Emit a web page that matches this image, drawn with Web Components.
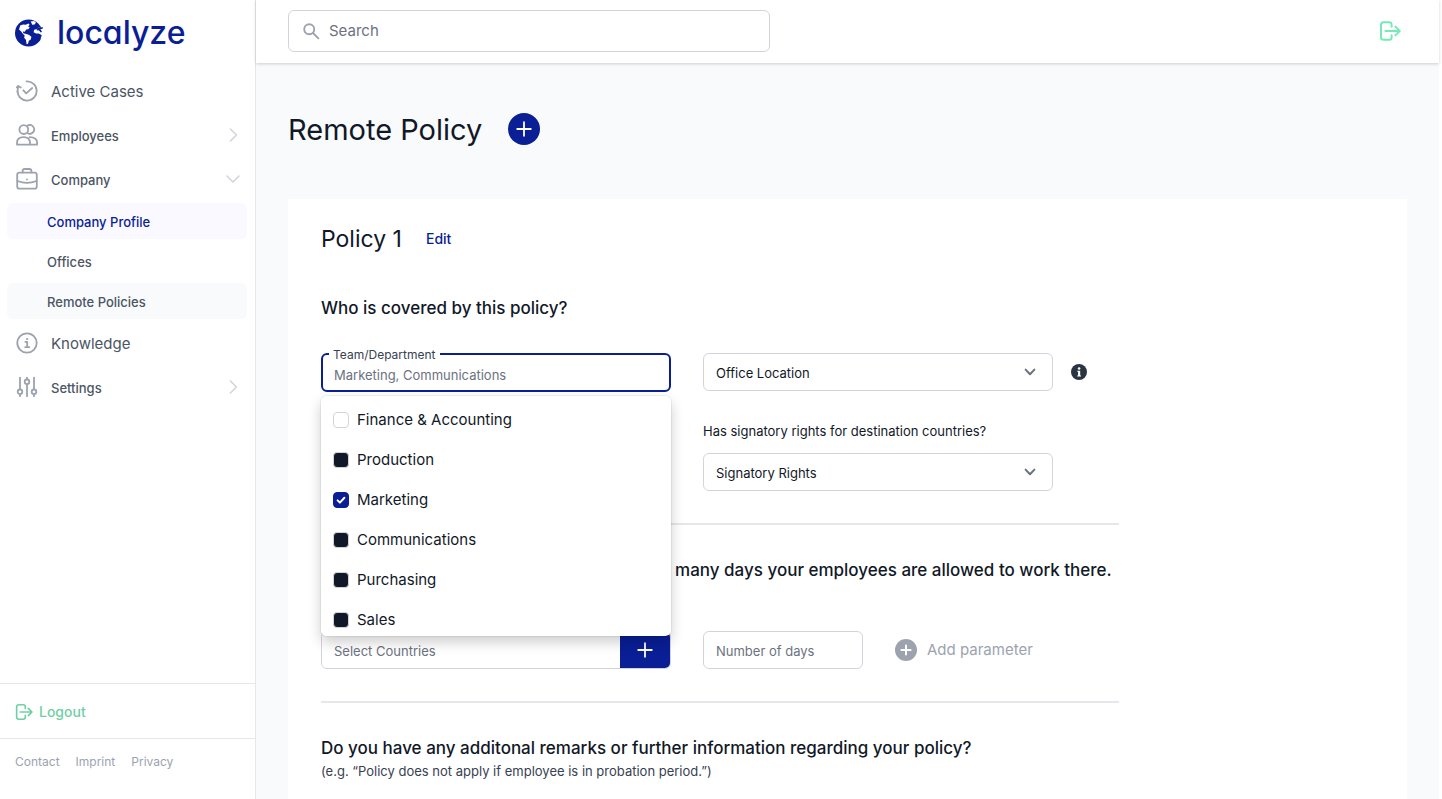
<!DOCTYPE html>
<html lang="en">
<head>
<meta charset="utf-8">
<meta name="viewport" content="width=device-width, initial-scale=1">
<title>Localyze – Remote Policy</title>
<style>
  :root {
    --brand: #0a1e96;
    --ink: #111827;
    --text: #4b5563;
    --muted: #6b7280;
    --faint: #9ca3af;
    --line: #d1d5db;
    --rule: #e5e7eb;
    --surface: #f9fafc;
  }
  body { margin: 0; font-family: Inter, "Liberation Sans", sans-serif; font-size: 13px; line-height: 20px; color: var(--ink); background: #fff; }
</style>
</head>
<body>
<app-shell>
  <side-nav slot="nav">
    <nav-item icon="cases" size="large">Active Cases</nav-item>
    <nav-item icon="people" arrow="right">Employees</nav-item>
    <nav-item icon="briefcase" arrow="down">Company</nav-item>
    <nav-group>
      <nav-subitem state="current">Company Profile</nav-subitem>
      <nav-subitem>Offices</nav-subitem>
      <nav-subitem state="hover">Remote Policies</nav-subitem>
    </nav-group>
    <nav-item icon="info" size="large">Knowledge</nav-item>
    <nav-item icon="sliders" arrow="right">Settings</nav-item>
  </side-nav>
  <top-bar slot="top"></top-bar>
  <page-title>Remote Policy</page-title>
  <policy-card>
    <span slot="name">Policy 1</span>
    <form-section>
      <span slot="heading">Who is covered by this policy?</span>
      <form-grid>
        <multi-select label="Team/Department" placeholder="Marketing, Communications">
          <check-option state="off">Finance &amp; Accounting</check-option>
          <check-option state="filled">Production</check-option>
          <check-option state="on">Marketing</check-option>
          <check-option state="filled">Communications</check-option>
          <check-option state="filled">Purchasing</check-option>
          <check-option state="filled">Sales</check-option>
        </multi-select>
        <select-field hint>Office Location</select-field>
        <select-field class="second" label="Has signatory rights for destination countries?">Signatory Rights</select-field>
      </form-grid>
    </form-section>
    <form-section>
      <span slot="heading">Please select countries and determine how many days your employees are allowed to work there.</span>
      <form-grid class="wide">
        <country-field></country-field>
        <days-field></days-field>
      </form-grid>
    </form-section>
    <form-section last>
      <span slot="heading">Do you have any additonal remarks or further information regarding your policy?</span>
      <span slot="note">(e.g. “Policy does not apply if employee is in probation period.”)</span>
    </form-section>
  </policy-card>
</app-shell>

<script>
const define = (name, render) => customElements.define(name, class extends HTMLElement {
  constructor() {
    super();
    this.attachShadow({ mode: 'open' });
  }
  connectedCallback() {
    if (this.shadowRoot.childNodes.length) return;
    const template = document.createElement('template');
    template.innerHTML = '<style>*{box-sizing:border-box}button,input,select{font:inherit;color:inherit}</style>' + render(this);
    this.shadowRoot.append(template.content.cloneNode(true));
  }
});

const stroke = (box, width, body) =>
  `<svg viewBox="0 0 ${box} ${box}" fill="none" stroke="currentColor" stroke-width="${width}" stroke-linecap="round" stroke-linejoin="round">${body}</svg>`;

const icons = {
  globe: `<svg viewBox="0 0 28 28"><circle cx="13.6" cy="14" r="13.6" fill="currentColor"/>
    <path fill="#fff" d="M5.2 6.6 8 5.4l2.6.4 2.8-1.2 1.2 1.2-1.4 1.6 1.6 1.2-1.6 1.6-2 .4-1.4 2.2-2-.2.6 1.6 2 .6 3.4 1 2.6 2-.6 2.6-2 1.4-.8 3-1.4.4-.6-4.2-1.8-2.2.4-2.6L8 15 6.2 12.6 4 10.6z"/>
    <path fill="#fff" d="M15.6 2.6 19 2l2 1.6-1.4 1.8-2.4.4-.6-1.6zM28 9.2l-4-.8-2 1.6-2.8.8-.6 2.4 2.4 1.2 2 .4 1.4 3.4.8 1.4L28 19z"/>
    <path fill="currentColor" d="m21.6 10 2.6-1.6 3.8-.2-.2 1.4-2.4.6 1.6 2.6-1.2.6-2-2.2-1.8.2zM20.8 15l3-.4 3 1.6-1.6 4-2.6.4-1.4-3z"/></svg>`,
  cases: stroke(22, 1.8, '<path d="M10.6 1.4a9.6 9.6 0 1 1-9.1 9.9"/><path d="M.9 7.4 2.2 5.9 4.8 7.6M2.2 5.9 1.5 11.3M7.4 10.3l2.8 3 6-5.3"/>'),
  people: stroke(22, 1.8, '<circle cx="7.8" cy="5.6" r="4.4"/><path d="M11.4 1.7a4.4 4.4 0 1 1 .2 7.6M1 20.6v-1.8c0-3.5 2.6-5.6 6.5-5.6s6.5 2.1 6.5 5.6v1.8zM13.6 13.2c4.4 0 7.5 1.9 7.5 5.6v1.8H14"/>'),
  briefcase: stroke(22, 1.8, '<rect x="1.2" y="4.6" width="19.6" height="16" rx="2.2"/><path d="M6.6 4.4V3.2c0-1.4.8-2.2 2.2-2.2h4.4c1.4 0 2.2.8 2.2 2.2v1.2M1.4 13c6.2 2.4 13 2.4 19.2 0M11 11.3v.2"/>'),
  info: stroke(22, 1.8, '<circle cx="11" cy="11" r="9.7"/><path d="M9.4 9.9h1.8V15M9.2 15.2h4"/><circle cx="11" cy="7" r=".7" fill="currentColor" stroke-width=".8"/>'),
  sliders: stroke(22, 1.8, '<path d="M4 1.6v11.6M4 18.4v1.8M11 1.6v1.6M11 8.4v11.8M18 1.6v11.6M18 18.4v1.8"/><circle cx="4" cy="15.8" r="2.3"/><circle cx="11" cy="5.8" r="2.3"/><circle cx="18" cy="15.8" r="2.3"/>'),
  right: stroke(16, 1.6, '<path d="m5.4 2 6 6-6 6"/>'),
  down: stroke(16, 1.6, '<path d="m2 5 6 6 6-6"/>'),
  exit: stroke(22, 2, '<path d="M12.6 6.8V4.6c0-1.5-1-2.4-2.6-2.4H4.6C3 2.2 2 3.2 2 4.8v12.4c0 1.6 1 2.6 2.6 2.6H10c1.6 0 2.6-.9 2.6-2.4v-2.2M6.4 11h14.2M16.4 6.6l4.3 4.4-4.3 4.4"/>'),
  search: '<svg viewBox="0 0 18 18" fill="none" stroke="currentColor" stroke-width="2"><circle cx="6.6" cy="6.6" r="5.3"/><path d="m10.6 10.6 6.2 6.2"/></svg>',
  plus: stroke(16, 1.8, '<path d="M8 1.2v13.6M1.2 8h13.6"/>'),
  caret: stroke(12, 2, '<path d="m1.6 3.6 4.4 4.6 4.4-4.6"/>'),
  infoSolid: '<svg viewBox="0 0 16 16"><circle cx="8" cy="8" r="8" fill="currentColor"/><path fill="#fff" d="M6.4 6.8h2.8v4.6h.8v1.2H6.2v-1.2h.9V8h-.7z"/><circle cx="8.1" cy="4.5" r="1.3" fill="#fff"/></svg>',
  plusSolid: '<svg viewBox="0 0 22 22"><circle cx="11" cy="11" r="11" fill="currentColor"/><path d="M11 6.4v9.2M6.4 11h9.2" stroke="#fff" stroke-width="2" stroke-linecap="round"/></svg>',
  tick: stroke(16, 2, '<path d="m4.6 8.4 2.3 2.2 4.5-4.8"/>')
};

define('ui-icon', el => `<style>:host{display:block;flex:none}svg{display:block;width:100%;height:100%}</style>${icons[el.getAttribute('name')]}`);

define('app-shell', () => `<style>
  :host{display:grid;grid-template-columns:256px minmax(0,1fr);min-height:100vh}
  .nav{border-right:1px solid var(--rule)}
  .page{display:flex;flex-direction:column;background:var(--surface);border-right:3px solid #fff;min-width:0}
  main{flex:1;display:flex;flex-direction:column;padding:0 32px}
  </style>
  <div class="nav"><slot name="nav"></slot></div>
  <div class="page"><slot name="top"></slot><main><slot></slot></main></div>`);

define('side-nav', () => `<style>
  :host{display:flex;flex-direction:column;height:100vh;position:sticky;top:0}
  .logo{display:flex;align-items:center;gap:14px;height:65px;padding:0 15px;color:var(--brand);text-decoration:none;font-size:32px;line-height:40px;font-weight:500;font-feature-settings:"cv11"}
  .logo ui-icon{width:28px;height:28px}
  nav{flex:1;padding-top:4px}
  .out{border-top:1px solid var(--rule);border-bottom:1px solid var(--rule);padding:18px 15px 16px}
  .out a{display:flex;align-items:center;gap:6px;color:#6fcfa5;text-decoration:none;font-size:14px;font-weight:500}
  .out ui-icon{width:18px;height:18px}
  footer{display:flex;gap:16px;padding:15px 15px 29px;font-size:12px;line-height:16px}
  footer a{color:var(--faint);text-decoration:none}
  </style>
  <a class="logo" href="#home"><ui-icon name="globe"></ui-icon>localyze</a>
  <nav aria-label="Main"><slot></slot></nav>
  <div class="out"><a href="#logout"><ui-icon name="exit"></ui-icon>Logout</a></div>
  <footer><a href="#contact">Contact</a><a href="#imprint">Imprint</a><a href="#privacy">Privacy</a></footer>`);

define('nav-item', el => `<style>
  :host{display:block}
  a{display:flex;align-items:center;height:44px;padding:0 14px 0 16px;gap:13px;color:var(--text);text-decoration:none;font-weight:500}
  :host([size=large]) a{font-size:15px;font-weight:400}
  .lead{width:22px;height:22px;color:var(--faint)}
  .label{flex:1;padding-top:2px}
  .arrow{width:16px;height:16px;color:var(--line)}
  </style><a href="#"><ui-icon class="lead" name="${el.getAttribute('icon')}"></ui-icon><span class="label"><slot></slot></span>
  ${el.hasAttribute('arrow') ? `<ui-icon class="arrow" name="${el.getAttribute('arrow')}"></ui-icon>` : ''}</a>`);

define('nav-group', () => `<style>:host{display:flex;flex-direction:column;gap:4px;padding:2px 8px 2px 7px}</style><slot></slot>`);

define('nav-subitem', () => `<style>
  :host{display:block}
  a{display:block;padding:9px 40px 7px;border-radius:6px;color:var(--text);text-decoration:none;font-weight:500}
  :host([state=current]) a{background:#faf9ff;color:var(--brand)}
  :host([state=hover]) a{background:#f8fafc}
  </style><a href="#"><slot></slot></a>`);

define('top-bar', () => `<style>
  :host{display:block;background:#fff;box-shadow:0 1px 3px rgba(0,0,0,.18)}
  header{display:flex;align-items:center;justify-content:space-between;height:63px;padding:0 38px 1px 32px}
  label{display:flex;align-items:center;gap:9px;flex:0 1 482px;height:42px;padding:0 14px;border:1px solid var(--line);border-radius:6px;color:var(--faint)}
  label ui-icon{width:17px;height:17px}
  input{flex:1;min-width:0;border:0;outline:0;padding:0;background:none;font-size:15px;color:var(--ink)}
  input::placeholder{color:var(--muted);opacity:1}
  button{border:0;padding:0;background:none;color:#75eab6}
  button ui-icon{width:22px;height:22px}
  </style><header><label><ui-icon name="search"></ui-icon><input type="search" aria-label="Search" placeholder="Search"></label>
  <button type="button" aria-label="Log out"><ui-icon name="exit"></ui-icon></button></header>`);

define('page-title', () => `<style>
  :host{display:flex;align-items:center;gap:26px;padding:47px 0 51px}
  h1{margin:0;padding-top:2px;font-size:29px;line-height:36px;font-weight:400}
  button{display:grid;place-items:center;width:32px;height:32px;padding:0;border:0;border-radius:50%;background:var(--brand);color:#fff}
  ui-icon{width:16px;height:16px}
  </style><h1><slot></slot></h1><button type="button" aria-label="Add policy"><ui-icon name="plus"></ui-icon></button>`);

define('policy-card', () => `<style>
  :host{display:block;flex:1;background:#fff;padding:24px 33px 16px}
  header{display:flex;align-items:center;gap:24px;margin-bottom:40px}
  h2{margin:0;font-size:23px;line-height:32px;font-weight:400}
  a{color:var(--brand);text-decoration:none;font-size:14px;font-weight:500}
  .body{max-width:798px}
  </style><header><h2><slot name="name"></slot></h2><a href="#edit">Edit</a></header><div class="body"><slot></slot></div>`);

define('form-section', () => `<style>
  :host{display:block;margin-bottom:32px;padding-bottom:32px;border-bottom:2px solid var(--rule)}
  :host([last]){border:0;margin:0;padding:0}
  h3{margin:0;font-size:17px;line-height:26px;font-weight:500}
  p{margin:0;color:#374151}
  </style><h3><slot name="heading"></slot></h3><p><slot name="note"></slot></p><slot></slot>`);

define('form-grid', () => `<style>
  :host{display:grid;grid-template-columns:repeat(2,minmax(0,350px));column-gap:32px;row-gap:30px;margin-top:32px}
  :host(.wide){margin-top:48px}
  ::slotted(.second){grid-column:2}
  </style><slot></slot>`);

define('multi-select', el => `<style>
  :host{display:block;position:relative;height:38px;z-index:1}
  input{display:block;width:100%;height:39px;padding:4px 11px 0;border:2px solid var(--brand);border-radius:6px;outline:0;background:#fff}
  input::placeholder{color:var(--muted);opacity:1}
  label{position:absolute;left:8px;top:-6px;padding:0 4px;background:#fff;font-size:12px;line-height:16px;color:#374151}
  .menu{position:absolute;left:0;right:0;top:43px;max-height:240px;overflow:auto;scrollbar-width:none;padding-top:4px;background:#fff;border-radius:6px;box-shadow:0 0 0 1px rgba(0,0,0,.05),0 6px 14px rgba(0,0,0,.2)}
  </style><input id="team" type="text" placeholder="${el.getAttribute('placeholder')}"><label for="team">${el.getAttribute('label')}</label>
  <div class="menu"><slot></slot></div>`);

define('check-option', el => `<style>
  :host{display:block}
  label{display:flex;align-items:center;gap:8px;height:40px;padding:0 12px;font-size:15px}
  .box{display:grid;flex:none;width:16px;height:16px}
  .box > *{grid-area:1/1;width:16px;height:16px}
  input{appearance:none;margin:0;border:1px solid var(--line);border-radius:4px;background:#fff}
  :host([state=filled]) input{background:var(--ink)}
  :host([state=on]) input{background:var(--brand);border-color:var(--brand)}
  ui-icon{color:#fff;pointer-events:none}
  </style><label><span class="box"><input type="checkbox"${el.getAttribute('state') === 'on' ? ' checked' : ''}>${el.getAttribute('state') === 'on' ? '<ui-icon name="tick"></ui-icon>' : ''}</span><slot></slot></label>`);

define('select-field', el => `<style>
  :host{display:block}
  label{display:block;margin-bottom:12px}
  .row{display:grid;align-items:center;position:relative}
  select{grid-area:1/1;appearance:none;width:100%;height:38px;padding:2px 40px 0 12px;border:1px solid var(--line);border-radius:6px;background:#fff}
  .caret{grid-area:1/1;justify-self:end;margin-right:17px;width:12px;height:12px;color:var(--muted);pointer-events:none}
  .hint{position:absolute;left:100%;margin-left:18px;width:16px;height:16px;color:#2b3442}
  </style>${el.hasAttribute('label') ? `<label for="field">${el.getAttribute('label')}</label>` : ''}
  <div class="row"><select id="field"${el.hasAttribute('label') ? '' : ` aria-label="${el.textContent}"`}><option>${el.textContent}</option></select>
  <ui-icon class="caret" name="caret"></ui-icon>${el.hasAttribute('hint') ? '<ui-icon class="hint" name="infoSolid"></ui-icon>' : ''}</div>`);

define('country-field', () => `<style>
  :host{display:flex;box-sizing:border-box;height:38px;border:1px solid var(--line);border-radius:6px;overflow:hidden}
  input{flex:1;min-width:0;border:0;outline:0;padding:2px 12px 0;background:#fff}
  input::placeholder{color:var(--muted);opacity:1}
  button{display:grid;place-items:center;width:50px;border:0;padding:0;background:var(--brand);color:#fff}
  ui-icon{width:16px;height:16px}
  </style><input type="text" aria-label="Select Countries" placeholder="Select Countries"><button type="button" aria-label="Add country"><ui-icon name="plus"></ui-icon></button>`);

define('days-field', () => `<style>
  :host{display:flex;align-items:center;gap:32px}
  input{width:160px;height:38px;border:1px solid var(--line);border-radius:6px;padding:2px 12px 0;background:#fff}
  input::placeholder{color:var(--muted);opacity:1}
  button{display:flex;align-items:center;gap:10px;border:0;padding:0;background:none;color:var(--faint);font-size:15px;white-space:nowrap}
  ui-icon{width:22px;height:22px}
  </style><input type="text" inputmode="numeric" aria-label="Number of days" placeholder="Number of days"><button type="button"><ui-icon name="plusSolid"></ui-icon>Add parameter</button>`);
</script>
</body>
</html>
